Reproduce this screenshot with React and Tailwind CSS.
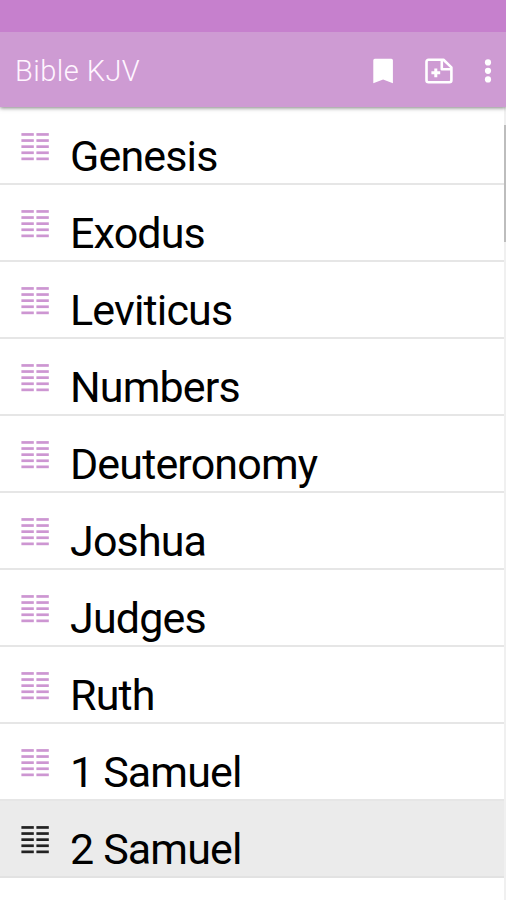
const books = [
  "Genesis",
  "Exodus",
  "Leviticus",
  "Numbers",
  "Deuteronomy",
  "Joshua",
  "Judges",
  "Ruth",
  "1 Samuel",
  "2 Samuel",
];

function ColumnsIcon({ className }) {
  return (
    <svg className={className} width="28" height="28" viewBox="0 0 28 28" fill="currentColor">
      {[0, 6.1, 12.2, 18.3, 24.4].map((y) => (
        <g key={y}>
          <rect x="0.4" y={y + 0.1} width="12.4" height="2.7" />
          <rect x="15.4" y={y + 0.1} width="12.4" height="2.7" />
        </g>
      ))}
    </svg>
  );
}

function BookmarkIcon() {
  return (
    <svg width="20" height="26" viewBox="0 0 20 26" fill="#fff">
      <path d="M1.8 0.8h16.6a1.5 1.5 0 0 1 1.5 1.5V25.2L10.1 21.4 0.3 25.2V2.3a1.5 1.5 0 0 1 1.5-1.5z" />
    </svg>
  );
}

function NoteAddIcon() {
  return (
    <svg width="28" height="26" viewBox="0 0 28 26" fill="none" stroke="#fff" strokeWidth="2.6" strokeLinejoin="round">
      <path d="M3.5 1.8h15l7.9 7.6v12.8a2 2 0 0 1-2 2H3.5a2 2 0 0 1-2-2V3.8a2 2 0 0 1 2-2z" />
      <path d="M16.8 2v9.2H26" />
      <path d="M10.8 10.4v8.8M6.4 14.8h8.8" strokeWidth="3" />
    </svg>
  );
}

function MoreIcon() {
  return (
    <svg width="8" height="24" viewBox="0 0 8 24" fill="#fff">
      <circle cx="4" cy="3.4" r="3.1" />
      <circle cx="4" cy="11.8" r="3.1" />
      <circle cx="4" cy="20.4" r="3.1" />
    </svg>
  );
}

export default function App() {
  return (
    <div className="relative flex h-[900px] w-[506px] flex-col overflow-hidden bg-white font-['Roboto',sans-serif]">
      <div className="z-20 h-8 shrink-0 bg-[#c680cd]" />
      <header className="z-10 flex h-[75px] shrink-0 items-center bg-[#ce9bd3] pl-[15px] pr-[14px] pt-[2px] shadow-[0_1px_4px_rgba(0,0,0,0.5)]">
        <h1 className="grow pt-px text-[29px] font-light leading-none tracking-[0.45px] text-[#fff5ff]">Bible KJV</h1>
        <div className="flex items-center">
          <BookmarkIcon />
          <div className="ml-[32px]">
            <NoteAddIcon />
          </div>
          <div className="ml-[31px]">
            <MoreIcon />
          </div>
        </div>
      </header>
      <main className="flex grow">
        <ul className="grow pt-px">
          {books.map((book, i) => (
            <li
              key={book}
              className={`flex h-[77px] items-start border-b-2 pl-[21px] ${
                i === 9 ? "border-[#e2e2e2] bg-[#ebebeb]" : "border-[#e6e6e6]"
              }`}
            >
              <ColumnsIcon className={`mt-[25px] shrink-0 ${i === 9 ? "text-[#222]" : "text-[#cd96d2]"}`} />
              <span className="ml-[21px] mt-[23px] whitespace-nowrap text-[43px] leading-[50px] tracking-[-0.85px] text-black">
                {book}
              </span>
            </li>
          ))}
        </ul>
        <div className="w-[2px] bg-[#f0f0f0] pt-[18px]">
          <div className="h-[117px] bg-[#bdbdbd]" />
        </div>
      </main>
    </div>
  );
}
